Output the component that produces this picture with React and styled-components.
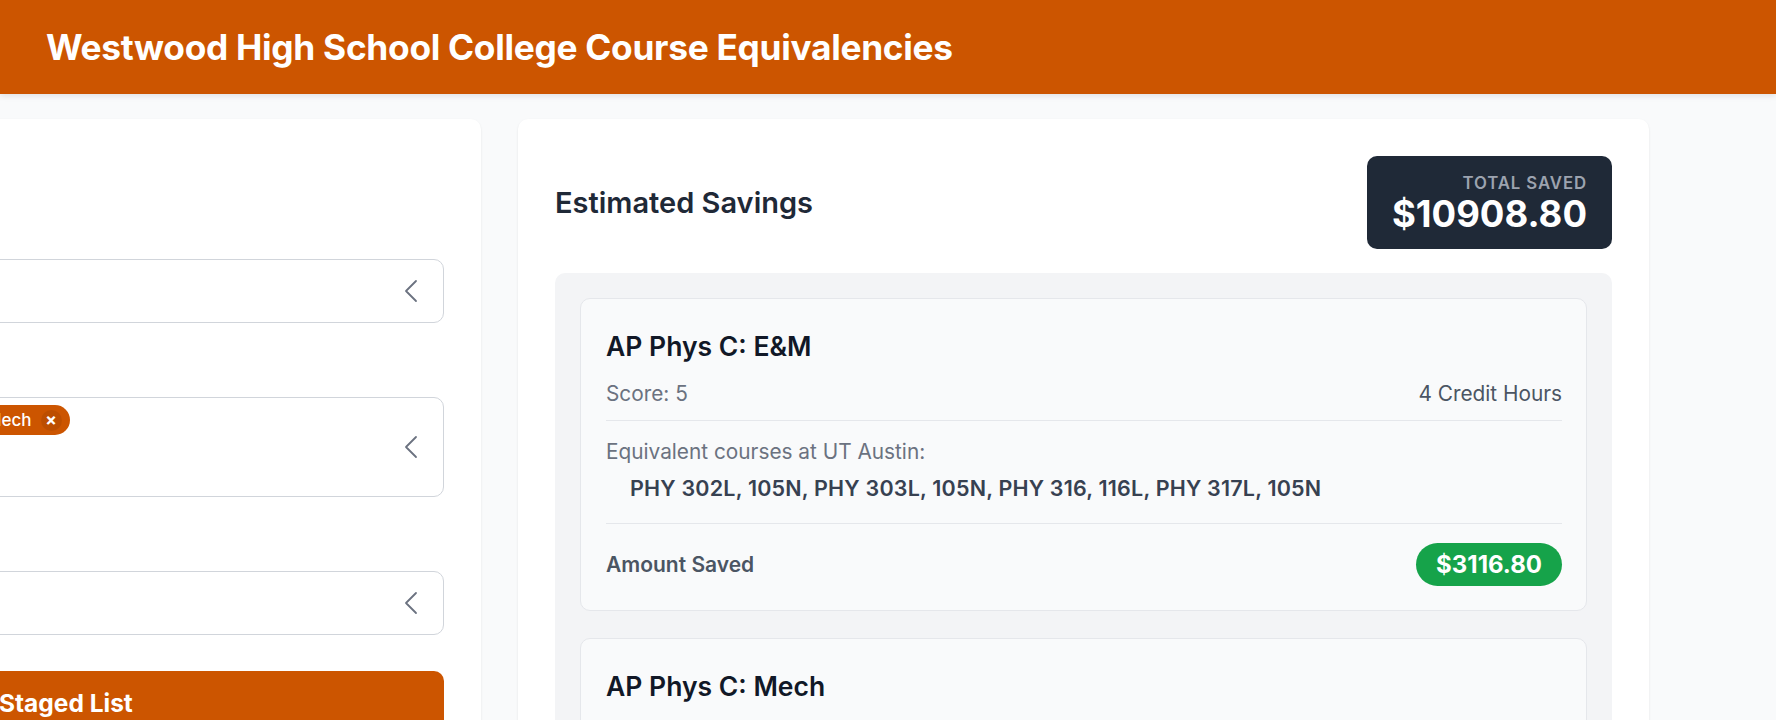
import React from 'react';
import styled, { createGlobalStyle } from 'styled-components';

const GlobalStyle = createGlobalStyle`
  html, body {
    margin: 0;
    padding: 0;
    overflow: hidden;
    background: #f9fafb;
    font-family: Inter, "Noto Sans", sans-serif;
  }
  * { box-sizing: border-box; }
`;

const courses = [
    {
        name: 'AP Phys C: E&M',
        score: 5,
        hours: 4,
        equivalents: 'PHY 302L, 105N, PHY 303L, 105N, PHY 316, 116L, PHY 317L, 105N',
        saved: '3116.80',
    },
    {
        name: 'AP Phys C: Mech',
        score: 5,
        hours: 4,
        equivalents: 'PHY 301, 101L, PHY 302K, 102M',
        saved: '3116.80',
    },
];

const Chevron = () => (
    <ChevronIcon width="14" height="24" viewBox="0 0 14 24">
        <polyline points="12,2 2,12 12,22" fill="none" stroke="#6b7280" strokeWidth="1.8" strokeLinecap="round" strokeLinejoin="round" />
    </ChevronIcon>
);

const App = () => {
    return (
        <>
            <GlobalStyle />
            <Header>
                <Title>Westwood High School College Course Equivalencies</Title>
            </Header>
            <Main>
                <LeftPanel>
                    <PanelHeading>Exams</PanelHeading>
                    <FieldLabel>School</FieldLabel>
                    <Select>
                        <Placeholder>Select…</Placeholder>
                        <Chevron />
                    </Select>
                    <FieldLabel>AP Exams</FieldLabel>
                    <Select tall>
                        <Chips>
                            <Chip>
                                AP Phys C: Mech
                                <ChipClose>×</ChipClose>
                            </Chip>
                        </Chips>
                        <Chevron />
                    </Select>
                    <FieldLabel>Score</FieldLabel>
                    <Select>
                        <Placeholder>Select…</Placeholder>
                        <Chevron />
                    </Select>
                    <StageButton>Add to Staged List</StageButton>
                </LeftPanel>

                <RightPanel>
                    <SavingsHeader>
                        <SectionTitle>Estimated Savings</SectionTitle>
                        <TotalBox>
                            <TotalLabel>Total Saved</TotalLabel>
                            <TotalValue>$10908.80</TotalValue>
                        </TotalBox>
                    </SavingsHeader>
                    <CourseList>
                        {courses.map((c) => (
                            <CourseCard key={c.name}>
                                <CourseName>{c.name}</CourseName>
                                <ScoreRow>
                                    <Score>Score: {c.score}</Score>
                                    <Hours>{c.hours} Credit Hours</Hours>
                                </ScoreRow>
                                <EquivSection>
                                    <EquivLabel>Equivalent courses at UT Austin:</EquivLabel>
                                    <EquivCourses>{c.equivalents}</EquivCourses>
                                </EquivSection>
                                <AmountRow>
                                    <AmountLabel>Amount Saved</AmountLabel>
                                    <AmountPill>${c.saved}</AmountPill>
                                </AmountRow>
                            </CourseCard>
                        ))}
                    </CourseList>
                </RightPanel>
            </Main>
        </>
    );
};

export default App;

const Header = styled.header`
    height: 94px;
    background: #cc5500;
    display: flex;
    align-items: center;
    padding-left: 46px;
    box-shadow: 0 2px 6px rgba(0, 0, 0, 0.1);
`;

const Title = styled.h1`
    margin: 0;
    color: #ffffff;
    font-size: 35.3px;
    font-weight: 700;
    letter-spacing: -0.3px;
`;

const Main = styled.main`
    display: grid;
    grid-template-columns: 652px 1131px;
    gap: 37px;
    align-items: start;
    padding-top: 25px;
    margin-left: -171px;
`;

const Panel = styled.section`
    background: #ffffff;
    border-radius: 10px;
    box-shadow: 0 1px 3px rgba(0, 0, 0, 0.06), 0 1px 2px rgba(0, 0, 0, 0.04);
`;

const LeftPanel = styled(Panel)`
    padding: 38px 37px 38px 38px;
    min-height: 700px;
`;

const PanelHeading = styled.h2`
    margin: 0 0 26px;
    font-size: 29px;
    line-height: 38px;
    font-weight: 600;
    color: #1f2937;
`;

const FieldLabel = styled.label`
    display: block;
    font-size: 16px;
    line-height: 24px;
    font-weight: 600;
    color: #374151;
    margin-bottom: 14px;
`;

const Select = styled.div`
    display: flex;
    align-items: center;
    justify-content: space-between;
    min-height: ${(p) => (p.tall ? '100px' : '64px')};
    border: 1px solid #d1d5db;
    border-radius: 10px;
    padding: ${(p) => (p.tall ? '0 25px 0 12px' : '0 25px 0 16px')};
    margin-bottom: 36px;
    background: #ffffff;
`;

const Placeholder = styled.span`
    font-size: 16px;
    color: #9ca3af;
`;

const ChevronIcon = styled.svg`
    flex-shrink: 0;
`;

const Chips = styled.div`
    align-self: flex-start;
    display: flex;
    flex-wrap: wrap;
    gap: 8px;
    padding-top: 7px;
`;

const Chip = styled.span`
    display: inline-flex;
    align-items: center;
    gap: 9px;
    height: 30px;
    padding: 0 8px 0 12px;
    border-radius: 999px;
    background: #cc5500;
    color: #ffffff;
    font-size: 17px;
    font-weight: 500;
`;

const ChipClose = styled.span`
    display: inline-flex;
    align-items: center;
    justify-content: center;
    width: 21px;
    height: 21px;
    border-radius: 50%;
    background: rgba(0, 0, 0, 0.08);
    font-size: 17px;
    font-weight: 700;
    line-height: 1;
`;

const StageButton = styled.button`
    display: flex;
    align-items: center;
    width: 100%;
    height: 64px;
    margin-top: 2px;
    padding-left: 48px;
    border: none;
    border-radius: 10px;
    background: #cc5500;
    color: #ffffff;
    font-family: inherit;
    font-size: 24.5px;
    font-weight: 700;
`;

const RightPanel = styled(Panel)`
    padding: 37px 37px 38px 37px;
    min-height: 700px;
`;

const SavingsHeader = styled.div`
    display: flex;
    align-items: center;
    justify-content: space-between;
    margin-bottom: 24px;
`;

const SectionTitle = styled.h2`
    margin: 0;
    font-size: 29px;
    line-height: 38px;
    font-weight: 600;
    color: #1f2937;
`;

const TotalBox = styled.div`
    display: flex;
    flex-direction: column;
    align-items: flex-end;
    padding: 15px 25px 16px;
    border-radius: 10px;
    background: #1f2937;
`;

const TotalLabel = styled.span`
    font-size: 16.8px;
    line-height: 24px;
    font-weight: 600;
    letter-spacing: 0.9px;
    text-transform: uppercase;
    color: #9ca3af;
`;

const TotalValue = styled.span`
    font-size: 36.5px;
    line-height: 38px;
    font-weight: 700;
    color: #ffffff;
`;

const CourseList = styled.div`
    display: flex;
    flex-direction: column;
    gap: 27px;
    padding: 25px;
    border-radius: 10px;
    background: #f3f4f6;
`;

const CourseCard = styled.article`
    padding: 24px 24px 24px 25px;
    border: 1px solid #e5e7eb;
    border-radius: 10px;
    background: #f9fafb;
`;

const CourseName = styled.h3`
    margin: 6px 0 16px;
    font-size: 26.5px;
    line-height: 34px;
    font-weight: 600;
    color: #111827;
`;

const ScoreRow = styled.div`
    display: flex;
    justify-content: space-between;
    padding-bottom: 12px;
    border-bottom: 1px solid #e5e7eb;
    font-size: 20.8px;
    line-height: 29px;
`;

const Score = styled.span`
    color: #6b7280;
`;

const Hours = styled.span`
    color: #4b5563;
`;

const EquivSection = styled.div`
    padding: 16px 0 20px;
    border-bottom: 1px solid #e5e7eb;
`;

const EquivLabel = styled.div`
    font-size: 20.8px;
    line-height: 29px;
    color: #6b7280;
`;

const EquivCourses = styled.div`
    margin-top: 8px;
    padding-left: 24px;
    font-size: 21.5px;
    line-height: 29px;
    font-weight: 600;
    letter-spacing: 0.2px;
    color: #374151;
`;

const AmountRow = styled.div`
    display: flex;
    align-items: center;
    justify-content: space-between;
    padding-top: 19px;
`;

const AmountLabel = styled.span`
    font-size: 21px;
    font-weight: 600;
    color: #4b5563;
`;

const AmountPill = styled.span`
    display: inline-flex;
    align-items: center;
    height: 43px;
    padding: 0 20px;
    border-radius: 999px;
    background: #16a34a;
    color: #ffffff;
    font-size: 24px;
    font-weight: 700;
`;
